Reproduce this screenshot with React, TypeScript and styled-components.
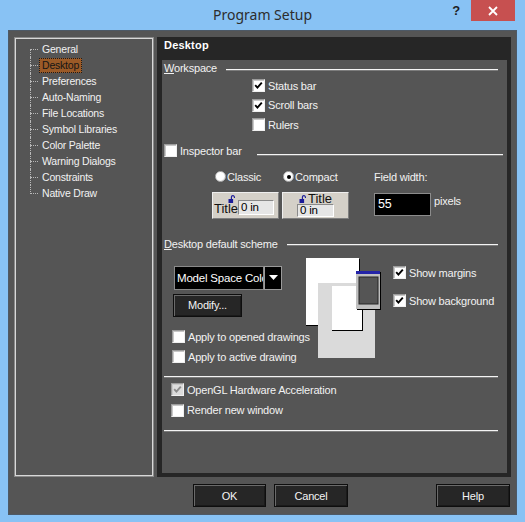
import React from 'react';
import styled, { createGlobalStyle } from 'styled-components';

const GlobalStyle = createGlobalStyle`
  html, body {
    margin: 0;
    padding: 0;
    background: #88c2f4;
  }
  body {
    font-family: "Liberation Sans", Arial, sans-serif;
    font-size: 11px;
    letter-spacing: -0.2px;
    color: #f2f2f2;
  }
`;

const Window = styled.div`
  width: 525px;
  height: 522px;
  background: #88c2f4;
  display: flex;
  flex-direction: column;
`;

const TitleBar = styled.div`
  height: 30px;
  display: grid;
  grid-template-columns: 1fr auto 1fr;
  align-items: start;
`;

const Title = styled.div`
  grid-column: 2;
  font-family: "Noto Sans", "Open Sans", sans-serif;
  font-size: 14px;
  letter-spacing: 0;
  line-height: 30px;
  color: #2d2d2d;
`;

const TitleButtons = styled.div`
  grid-column: 3;
  display: flex;
  justify-content: flex-end;
  align-items: flex-start;
`;

const HelpGlyph = styled.span`
  font-family: "Liberation Sans", Arial, sans-serif;
  font-weight: bold;
  font-size: 13px;
  line-height: 22px;
  color: #1e1e1e;
  margin-right: 11px;
`;

const CloseButton = styled.div`
  width: 44px;
  height: 21px;
  margin-right: 10px;
  background: #c75050;
  display: flex;
  align-items: center;
  justify-content: center;
`;

const Client = styled.div`
  margin: 0 8px 7px 8px;
  height: 485px;
  box-sizing: border-box;
  background: #555555;
  border: 1px solid #4d5966;
  padding: 6px 5px 0 5px;
  display: grid;
  grid-template-columns: 140px 354px;
  grid-template-rows: 440px auto;
  column-gap: 3px;
`;

const TreePanel = styled.div`
  box-sizing: border-box;
  border: 1px solid #8a8a8a;
  box-shadow: inset 0 0 0 1px #d8d8d8;
  padding-top: 3px;
`;

const TreeList = styled.ul`
  list-style: none;
  margin: 0;
  padding: 0;
`;

const TreeItem = styled.li<{ $first?: boolean; $last?: boolean }>`
  position: relative;
  height: 16px;
  padding-left: 24px;
  display: flex;
  align-items: center;
  font-size: 10.5px;
  &::before {
    content: '';
    position: absolute;
    left: 15px;
    top: 8px;
    width: 8px;
    border-top: 1px dotted #b8b8b8;
  }
  &::after {
    content: '';
    position: absolute;
    left: 15px;
    top: ${(p) => (p.$first ? '8px' : '0')};
    height: ${(p) => (p.$last ? '9px' : p.$first ? '8px' : '16px')};
    border-left: 1px dotted #b8b8b8;
  }
`;

const TreeLabel = styled.span<{ $selected?: boolean }>`
  height: 15px;
  line-height: 13px;
  padding: 0 2px;
  box-sizing: border-box;
  border: 1px dotted ${(p) => (p.$selected ? '#1a1a1a' : 'transparent')};
  background: ${(p) => (p.$selected ? '#9b5a27' : 'transparent')};
  color: ${(p) => (p.$selected ? '#151515' : '#f2f2f2')};
`;

const PageFrame = styled.div`
  background: #262626;
  padding: 0 4px 4px 5px;
  display: flex;
  flex-direction: column;
`;

const PageHeader = styled.div`
  height: 23px;
  line-height: 16px;
  padding-left: 2px;
  font-weight: bold;
  letter-spacing: 0.2px;
  color: #ffffff;
`;

const PagePanel = styled.div`
  flex: 1;
  background: #555555;
  display: flex;
  flex-direction: column;
`;

const GroupHeader = styled.div<{ $lineEnd: number; $top?: number }>`
  display: flex;
  align-items: center;
  height: 16px;
  padding-left: 2px;
  padding-right: ${(p) => p.$lineEnd}px;
  margin-top: ${(p) => p.$top ?? 0}px;
`;

const GroupLine = styled.div<{ $gap?: number; $drop?: number }>`
  flex: 1;
  height: 1px;
  background: #f4f4f4;
  box-shadow: 0 1px 0 #7c7c7c;
  margin-left: ${(p) => p.$gap ?? 9}px;
  margin-top: ${(p) => p.$drop ?? 2}px;
`;

const Separator = styled.div<{ $top: number }>`
  height: 1px;
  background: #f4f4f4;
  box-shadow: 0 1px 0 #7c7c7c;
  margin: ${(p) => p.$top}px 9px 0 2px;
`;

const CheckList = styled.div<{ $indent: number; $top?: number }>`
  display: flex;
  flex-direction: column;
  padding-left: ${(p) => p.$indent}px;
  margin-top: ${(p) => p.$top ?? 0}px;
`;

const CheckRow = styled.div<{ $h?: number }>`
  display: flex;
  align-items: center;
  height: ${(p) => p.$h ?? 20}px;
  white-space: nowrap;
`;

const Box = styled.span<{ $disabled?: boolean }>`
  width: 13px;
  height: 13px;
  flex: none;
  box-sizing: border-box;
  margin-right: 3px;
  background: ${(p) => (p.$disabled ? '#dcdcdc' : '#ffffff')};
  border: 1px solid;
  border-color: #9c9c9c #f0f0f0 #f0f0f0 #9c9c9c;
  box-shadow: inset 1px 1px 0 #c8c8c8;
  display: flex;
  align-items: center;
  justify-content: center;
`;

const Check: React.FC<{ checked?: boolean; disabled?: boolean; label: string; h?: number }> = ({
  checked,
  disabled,
  label,
  h
}) => (
  <CheckRow $h={h}>
    <Box $disabled={disabled}>
      {checked && (
        <svg width="9" height="9" viewBox="0 0 9 9">
          <polyline
            points="1.2,4.2 3.4,6.6 7.8,1.6"
            fill="none"
            stroke={disabled ? '#8c8c8c' : '#000000'}
            strokeWidth="1.9"
          />
        </svg>
      )}
    </Box>
    {label}
  </CheckRow>
);

const InspectorGrid = styled.div`
  display: grid;
  grid-template-columns: 67px 67px auto;
  grid-template-rows: 16px 27px;
  column-gap: 3px;
  row-gap: 7px;
  margin: 10px 0 0 50px;
`;

const RadioLabel = styled.div<{ $pad: number }>`
  display: flex;
  align-items: center;
  padding-left: ${(p) => p.$pad}px;
  white-space: nowrap;
`;

const RadioDot = styled.span<{ $on?: boolean }>`
  width: 11px;
  height: 11px;
  border-radius: 50%;
  box-sizing: border-box;
  margin-right: 1px;
  background: radial-gradient(circle at 40% 40%, #ffffff 55%, #d6d6d6 100%);
  border: 1px solid #b4b4b4;
  display: flex;
  align-items: center;
  justify-content: center;
  &::after {
    content: '';
    width: 4px;
    height: 4px;
    border-radius: 50%;
    background: ${(p) => (p.$on ? '#000' : 'transparent')};
  }
`;

const FieldLabel = styled.div`
  margin-left: 22px;
  display: flex;
  align-items: center;
`;

const FieldRow = styled.div`
  margin-left: 22px;
  display: flex;
  align-items: flex-start;
  margin-top: 1px;
`;

const FieldInput = styled.div`
  width: 57px;
  height: 23px;
  box-sizing: border-box;
  background: #000;
  border: 1px solid #8c8c8c;
  padding-left: 3px;
  font-size: 12.5px;
  line-height: 21px;
  color: #fff;
`;

const FieldUnit = styled.span`
  margin-left: 3px;
  line-height: 16px;
`;

const Sample = styled.div<{ $compact?: boolean }>`
  box-sizing: border-box;
  background: #d4d0c8;
  border: 1px solid;
  border-color: #eeeeee #7e7e7e #7e7e7e #eeeeee;
  color: #111;
  display: flex;
  flex-direction: ${(p) => (p.$compact ? 'column' : 'row')};
  align-items: ${(p) => (p.$compact ? 'center' : 'flex-end')};
  padding: ${(p) => (p.$compact ? '1px 0 0 0' : '0 0 3px 1px')};
`;

const SampleTitle = styled.div<{ $compact?: boolean }>`
  display: flex;
  flex-direction: ${(p) => (p.$compact ? 'row' : 'column')};
  align-items: ${(p) => (p.$compact ? 'center' : 'flex-end')};
  gap: ${(p) => (p.$compact ? '2px' : '0')};
  font-size: 13px;
  letter-spacing: 0;
  line-height: ${(p) => (p.$compact ? '10px' : '12px')};
  & svg {
    margin-right: ${(p) => (p.$compact ? '0' : '3px')};
  }
`;

const SampleInput = styled.div<{ $w: number; $h: number }>`
  width: ${(p) => p.$w}px;
  height: ${(p) => p.$h}px;
  box-sizing: border-box;
  background: #e6e6e6;
  border: 1px solid;
  border-color: #8a8a8a #ffffff #ffffff #8a8a8a;
  font-size: 11.5px;
  line-height: ${(p) => p.$h - 2}px;
  padding-left: 2px;
  color: #000;
`;

const Lock: React.FC = () => (
  <svg width="7" height="8" viewBox="0 0 7 8">
    <path d="M3.4 4.2V2.1a1.5 1.5 0 0 1 3 0v0.9" fill="none" stroke="#1b1b98" strokeWidth="1.1" />
    <rect x="0.5" y="4" width="4.6" height="4" fill="#1b1b98" />
  </svg>
);

const SchemeBody = styled.div`
  display: flex;
  align-items: flex-start;
  margin-top: 6px;
  padding-left: 10px;
`;

const SchemeLeft = styled.div`
  width: 134px;
  padding-top: 8px;
  display: flex;
  flex-direction: column;
`;

const Select = styled.div`
  width: 108px;
  height: 24px;
  margin-left: 2px;
  display: flex;
`;

const SelectText = styled.div`
  flex: 1;
  min-width: 0;
  overflow: hidden;
  white-space: nowrap;
  text-overflow: clip;
  background: #000;
  border: 1px solid #8a8a8a;
  padding-left: 2px;
  line-height: 22px;
  font-size: 11.5px;
  color: #fff;
`;

const SelectArrow = styled.div`
  width: 18px;
  box-sizing: border-box;
  background: #000;
  border: 1px solid #9a9a9a;
  display: flex;
  align-items: center;
  justify-content: center;
`;

const DarkButton = styled.div<{ $w: number }>`
  width: ${(p) => p.$w}px;
  height: 23px;
  box-sizing: border-box;
  background: #262626;
  border: 1px solid #0e0e0e;
  box-shadow: inset 1px 1px 0 #6a6a6a, inset -1px -1px 0 #1a1a1a;
  display: flex;
  align-items: center;
  justify-content: center;
  color: #f4f4f4;
`;

const ModifyButton = styled(DarkButton)`
  margin: 4px 0 0 1px;
`;

const SchemeRight = styled.div`
  margin-left: 12px;
  padding-top: 5px;
  display: flex;
  flex-direction: column;
  gap: 8px;
`;

const ButtonBar = styled.div`
  grid-column: 1 / span 2;
  margin-top: 7px;
  padding-left: 179px;
  padding-right: 1px;
  display: flex;
  gap: 8px;
  & > :last-child {
    margin-left: auto;
  }
`;

const SchemePreview: React.FC = () => (
  <svg width="75" height="100" viewBox="0 0 75 100">
    <rect x="0" y="0" width="53" height="67" fill="#ffffff" />
    <rect x="53" y="1" width="1" height="67" fill="#000" />
    <rect x="0" y="67" width="54" height="1" fill="#000" />
    <rect x="12" y="25" width="57" height="75" fill="#dadada" />
    <rect x="26" y="28" width="30" height="44" fill="#ffffff" />
    <rect x="56" y="28" width="1" height="45" fill="#000" />
    <rect x="26" y="72" width="31" height="1" fill="#000" />
    <rect x="50" y="13" width="24" height="38" fill="#c0c0c0" />
    <rect x="50" y="13" width="24" height="3" fill="#2424a8" />
    <rect x="53" y="19" width="19" height="27" fill="#555555" stroke="#262626" strokeWidth="1" />
    <rect x="74" y="14" width="1" height="38" fill="#000" />
    <rect x="51" y="51" width="24" height="1" fill="#000" />
  </svg>
);

const treeItems = [
  'General',
  'Desktop',
  'Preferences',
  'Auto-Naming',
  'File Locations',
  'Symbol Libraries',
  'Color Palette',
  'Warning Dialogs',
  'Constraints',
  'Native Draw'
];

export default function App() {
  return (
    <Window>
      <GlobalStyle />
      <TitleBar>
        <Title>Program Setup</Title>
        <TitleButtons>
          <HelpGlyph>?</HelpGlyph>
          <CloseButton>
            <svg width="10" height="10" viewBox="0 0 10 10">
              <path d="M1 1L9 9M9 1L1 9" stroke="#fff" strokeWidth="1.8" />
            </svg>
          </CloseButton>
        </TitleButtons>
      </TitleBar>
      <Client>
        <TreePanel>
          <TreeList>
            {treeItems.map((name, i) => (
              <TreeItem key={name} $first={i === 0} $last={i === treeItems.length - 1}>
                <TreeLabel $selected={name === 'Desktop'}>{name}</TreeLabel>
              </TreeItem>
            ))}
          </TreeList>
        </TreePanel>

        <PageFrame>
          <PageHeader>Desktop</PageHeader>
          <PagePanel>
            <GroupHeader $lineEnd={9}>
              <span>
                <u>W</u>orkspace
              </span>
              <GroupLine />
            </GroupHeader>
            <CheckList $indent={90}>
              <Check checked label="Status bar" h={19.5} />
              <Check checked label="Scroll bars" h={19.5} />
              <Check label="Rulers" h={19.5} />
            </CheckList>

            <GroupHeader $lineEnd={4} $top={8}>
              <Check label="Inspector bar" h={16} />
              <GroupLine $gap={15} $drop={7} />
            </GroupHeader>
            <InspectorGrid>
              <RadioLabel $pad={3}>
                <RadioDot />
                Classic
              </RadioLabel>
              <RadioLabel $pad={1}>
                <RadioDot $on />
                Compact
              </RadioLabel>
              <FieldLabel>Field width:</FieldLabel>
              <Sample>
                <SampleTitle>
                  <Lock />
                  Title
                </SampleTitle>
                <SampleInput $w={36} $h={15}>0 in</SampleInput>
              </Sample>
              <Sample $compact>
                <SampleTitle $compact>
                  <Lock />
                  Title
                </SampleTitle>
                <SampleInput $w={37} $h={13}>0 in</SampleInput>
              </Sample>
              <FieldRow>
                <FieldInput>55</FieldInput>
                <FieldUnit>pixels</FieldUnit>
              </FieldRow>
            </InspectorGrid>

            <GroupHeader $lineEnd={9} $top={17}>
              <span>
                <u>D</u>esktop default scheme
              </span>
              <GroupLine />
            </GroupHeader>
            <SchemeBody>
              <SchemeLeft>
                <Select>
                  <SelectText>Model Space Colors</SelectText>
                  <SelectArrow>
                    <svg width="9" height="5" viewBox="0 0 9 5">
                      <path d="M0 0H9L4.5 5Z" fill="#fff" />
                    </svg>
                  </SelectArrow>
                </Select>
                <ModifyButton $w={69}>Modify...</ModifyButton>
                <CheckList $indent={0} $top={10}>
                  <Check label="Apply to opened drawings" />
                  <Check label="Apply to active drawing" />
                </CheckList>
              </SchemeLeft>
              <SchemePreview />
              <SchemeRight>
                <Check checked label="Show margins" />
                <Check checked label="Show background" />
              </SchemeRight>
            </SchemeBody>

            <Separator $top={9} />
            <CheckList $indent={9} $top={3}>
              <Check checked disabled label="OpenGL Hardware Acceleration" h={20.5} />
              <Check label="Render new window" h={20.5} />
            </CheckList>
            <Separator $top={9} />
          </PagePanel>
        </PageFrame>

        <ButtonBar>
          <DarkButton $w={73}>OK</DarkButton>
          <DarkButton $w={74}>Cancel</DarkButton>
          <DarkButton $w={74}>Help</DarkButton>
        </ButtonBar>
      </Client>
    </Window>
  );
}
